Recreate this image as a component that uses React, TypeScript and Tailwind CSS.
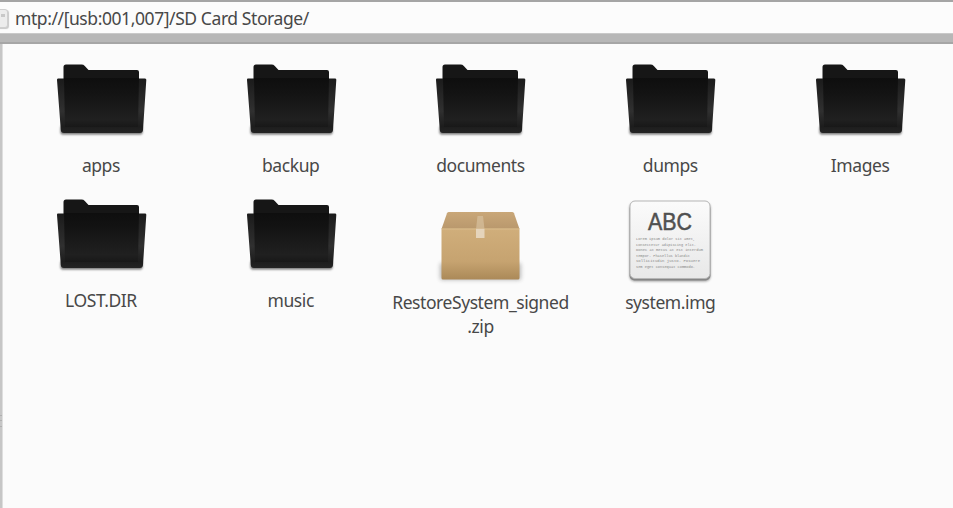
import React from "react";

function FolderIcon() {
  return (
    <svg width="100" height="90" viewBox="0 0 100 90" className="block shrink-0">
      <defs>
        <linearGradient id="front" x1="0" y1="0" x2="0" y2="1">
          <stop offset="0" stopColor="#0e0e0e" />
          <stop offset="0.3" stopColor="#131313" />
          <stop offset="0.85" stopColor="#202020" />
          <stop offset="1" stopColor="#181818" />
        </linearGradient>
        <linearGradient id="side" x1="0" y1="0" x2="0" y2="1">
          <stop offset="0" stopColor="#1b1b1b" />
          <stop offset="0.6" stopColor="#303030" />
          <stop offset="0.88" stopColor="#1d1d1d" />
          <stop offset="1" stopColor="#242424" />
        </linearGradient>
        <filter id="folderShadow" x="-10%" y="-300%" width="120%" height="700%">
          <feGaussianBlur stdDeviation="1" />
        </filter>
      </defs>
      <rect x="9.500" y="76" width="82" height="8.500" rx="2" fill="#444" opacity=".75" filter="url(#folderShadow)" />
      <path d="M12.500 31V17q0-2.500 2.500-2.500H30.500q2 0 3.300 1.400L37.500 20H86q2 0 2 2V31Z" fill="#161616" />
      <path d="M7 28.500H94q1.500 0 1.300 1.600L92 80q-.2 3-3.200 3H13q-3 0-3.200-3L6 30.100Q5.800 28.500 7 28.500Z" fill="url(#side)" />
      <path d="M13 28H88L87 77H14Z" fill="url(#front)" />
    </svg>
  );
}

function PackageIcon() {
  return (
    <svg width="100" height="90" viewBox="0 0 100 90" className="block shrink-0">
      <defs>
        <linearGradient id="boxFront" x1="0" y1="0" x2="0" y2="1">
          <stop offset="0" stopColor="#d0ae7b" />
          <stop offset="0.65" stopColor="#c6a370" />
          <stop offset="1" stopColor="#ab8958" />
        </linearGradient>
        <linearGradient id="boxTop" x1="0" y1="0" x2="0" y2="1">
          <stop offset="0" stopColor="#c9a778" />
          <stop offset="1" stopColor="#b9986d" />
        </linearGradient>
        <filter id="boxShadow" x="-20%" y="-50%" width="140%" height="200%">
          <feGaussianBlur stdDeviation="2" />
        </filter>
      </defs>
      <rect x="10" y="65" width="81" height="17" rx="2" fill="#555" opacity=".4" filter="url(#boxShadow)" />
      <path d="M19 14H82q1.500 0 2 1.300L89.500 31H11.500L17 15.300Q17.500 14 19 14Z" fill="url(#boxTop)" />
      <path d="M11.500 30.500H89.500V80q0 1.500-1.500 1.500H13q-1.500 0-1.500-1.500Z" fill="url(#boxFront)" />
      <path d="M12 31H89" stroke="#d9bc8d" strokeWidth="1" />
      <path d="M47.500 18H53L54.500 31H46Z" fill="#d9c3a1" opacity=".65" />
      <rect x="46" y="31" width="8.500" height="9" fill="#e5d4bb" />
    </svg>
  );
}

const loremLines = [
  "Lorem ipsum dolor sit amet,",
  "consectetur adipiscing elit.",
  "Donec at metus at est interdum",
  "tempor. Phasellus blandit",
  "sollicitudin justo. Posuere",
  "sem eget consequat commodo.",
];
const loremWidths = [59, 60, 67, 54, 64, 59];

function DocumentIcon() {
  return (
    <svg width="100" height="90" viewBox="0 0 100 90" className="block shrink-0">
      <defs>
        <linearGradient id="paper" x1="0" y1="0" x2="0" y2="1">
          <stop offset="0" stopColor="#fbfbfb" />
          <stop offset="1" stopColor="#e8e8e8" />
        </linearGradient>
        <filter id="paperShadow" x="-10%" y="-10%" width="120%" height="120%">
          <feGaussianBlur stdDeviation="0.8" />
        </filter>
      </defs>
      <rect x="9.500" y="4.500" width="81" height="79" rx="5" fill="#666" opacity=".6" filter="url(#paperShadow)" />
      <rect x="9.500" y="6" width="81" height="76.500" rx="5" fill="#858585" />
      <rect x="10" y="3" width="80" height="77.500" rx="5" fill="url(#paper)" stroke="#b6b6b6" strokeWidth="1" />
      <text x="28" y="31.500" textLength="44" lengthAdjust="spacingAndGlyphs" className="fill-[#505050] font-['Liberation_Sans',sans-serif] text-[23px]" stroke="#505050" strokeWidth="0.5">ABC</text>
      {loremLines.map((line, i) => (
        <text key={line} x="16" y={42 + i * 5.6} textLength={loremWidths[i]} lengthAdjust="spacingAndGlyphs" className="fill-[#888] font-['Liberation_Mono',monospace] text-[4px]">{line}</text>
      ))}
    </svg>
  );
}

const icons = { folder: FolderIcon, package: PackageIcon, document: DocumentIcon };
const files: { name: string[]; kind: keyof typeof icons }[] = [
  { name: ["apps"], kind: "folder" },
  { name: ["backup"], kind: "folder" },
  { name: ["documents"], kind: "folder" },
  { name: ["dumps"], kind: "folder" },
  { name: ["Images"], kind: "folder" },
  { name: ["LOST.DIR"], kind: "folder" },
  { name: ["music"], kind: "folder" },
  { name: ["RestoreSystem_signed", ".zip"], kind: "package" },
  { name: ["system.img"], kind: "document" },
];

export default function App() {
  return (
    <div className="flex h-[508px] w-[953px] flex-col overflow-hidden bg-[#fbfbfb] font-['Noto_Sans',sans-serif] text-[#484848]">
      <header className="flex h-[33px] shrink-0 items-center border-t-2 border-[#a5a5a5] bg-[#fcfcfc]">
        <div className="-ml-2 mt-0.5 h-[19px] w-4 shrink-0 rounded-[3px] border border-[#cfcfcf] bg-[#ececec] pl-2 shadow-[1px_1px_1px_#c8c8c8]">
          <div className="mt-1 h-[3px] w-1 bg-[#c8c8c8]" />
        </div>
        <span className="ml-[7px] whitespace-nowrap text-[17.5px] leading-6 tracking-[-0.42px]">mtp://[usb:001,007]/SD Card Storage/</span>
      </header>
      <div className="h-[11px] shrink-0 border-b-2 border-t border-b-[#a6a6a6] border-t-[#c9c9c9] bg-[#b7b7b7]" />
      <main className="flex min-h-0 flex-1">
        <div className="flex w-[3px] shrink-0 flex-col justify-center border-r border-[#dedede] bg-[#c6c6c6]">
          <div className="mt-[290px] flex h-3 w-0.5 flex-col justify-between border-y border-[#b0b0b0]">
            <div className="mt-1 h-px bg-[#b0b0b0]" />
          </div>
        </div>
        <div className="ml-[3px] grid w-[949px] shrink-0 auto-rows-[135px] grid-cols-5 pt-[6px]">
          {files.map(({ name, kind }) => {
            const Icon = icons[kind];
            return (
              <div key={name[0]} className={`flex flex-col items-center ${kind === "folder" ? "gap-[13px]" : "gap-[2px] pt-[13px]"}`}>
                <Icon />
                <div className="text-center text-[17.5px] leading-6 tracking-[-0.43px]">
                  {name.map((part) => <div key={part} className="whitespace-nowrap">{part}</div>)}
                </div>
              </div>
            );
          })}
        </div>
      </main>
    </div>
  );
}
